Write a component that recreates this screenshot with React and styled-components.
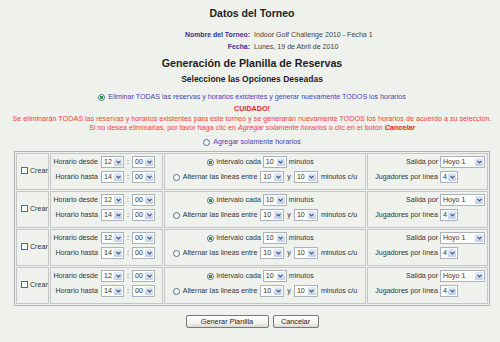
import React from 'react';
import styled, { createGlobalStyle } from 'styled-components';

const GlobalStyle = createGlobalStyle`
  html, body {
    margin: 0;
    padding: 0;
    background: #eff1ec;
  }
  body {
    font-family: 'Liberation Sans', Arial, sans-serif;
    font-size: 7.1px;
    color: #333;
  }
`;

const Page = styled.div`
  box-sizing: border-box;
  width: 500px;
  height: 342px;
  padding-left: 4px;
  display: flex;
  flex-direction: column;
  align-items: center;
  overflow: hidden;
  white-space: nowrap;
`;

const Title = styled.h1`
  margin: 7px 0 0;
  font-size: 10.5px;
  line-height: 13px;
  font-weight: bold;
  color: #1e1e1e;
`;

const InfoGrid = styled.div`
  align-self: stretch;
  margin-top: 9px;
  display: grid;
  grid-template-columns: 1fr 1fr;
  column-gap: 4px;
  line-height: 12px;
`;

const InfoLabel = styled.span`
  justify-self: end;
  font-size: 6.9px;
  font-weight: bold;
  color: #33338f;
`;

const InfoValue = styled.span`
  color: #444;
`;

const Heading = styled.h2`
  margin: 3px 0 0;
  font-size: 10.7px;
  line-height: 14px;
  font-weight: bold;
  color: #1e1e1e;
`;

const SubHeading = styled.h3`
  margin: 3px 0 0;
  font-size: 8.5px;
  line-height: 12px;
  font-weight: bold;
  color: #1e1e1e;
`;

const OptionLine = styled.label`
  margin-top: ${p => p.top}px;
  display: flex;
  align-items: center;
  gap: 3px;
  line-height: 12px;
  color: #4a44b4;
`;

const Warning = styled.div`
  margin-top: 1px;
  text-align: center;
  font-size: 7.2px;
  line-height: 9.5px;
  color: #ec4343;

  strong {
    color: #e02828;
  }
`;

const Radio = styled.span`
  box-sizing: border-box;
  display: inline-block;
  flex: none;
  width: 7px;
  height: 7px;
  border: 1px solid #4d6b93;
  border-radius: 50%;
  background: ${p =>
    p.checked ? 'radial-gradient(circle, #2d9b2d 0 1.4px, #ffffff 1.9px)' : '#ffffff'};
`;

const Checkbox = styled.span`
  box-sizing: border-box;
  display: inline-block;
  flex: none;
  width: 7px;
  height: 7px;
  border: 1px solid #4d6b93;
  background: #ffffff;
`;

const Table = styled.div`
  margin-top: 3px;
  display: grid;
  grid-template-columns: 33px 113px 202px 121px;
  grid-auto-rows: 37px;
  gap: 1px;
  padding: 1px;
  border: 1px solid #b4b4b4;
`;

const Cell = styled.div`
  box-sizing: border-box;
  border: 1px solid #c6c6c6;
`;

const CheckCell = styled(Cell)`
  display: flex;
  align-items: center;
  gap: 2px;
  padding: 0 0 2px 4px;
`;

const TimeCell = styled(Cell)`
  display: grid;
  grid-template-columns: 50px 23px 8px 23px;
  grid-auto-rows: 12px;
  row-gap: 3px;
  align-items: center;
  padding-top: 2px;
`;

const TimeLabel = styled.span`
  justify-self: end;
  padding-right: 3px;
`;

const Colon = styled.span`
  text-align: center;
`;

const IntervalCell = styled(Cell)`
  display: flex;
  flex-direction: column;
  align-items: center;
  gap: 3px;
  padding-top: 2px;
`;

const IntervalLine = styled.label`
  display: flex;
  align-items: center;
  gap: ${p => p.gap}px;
  height: 12px;
  margin-right: ${p => p.shift}px;
`;

const OutputCell = styled(Cell)`
  display: grid;
  grid-template-columns: 1fr 45px;
  grid-auto-rows: 12px;
  column-gap: 2px;
  row-gap: 3px;
  align-items: center;
  padding: 2px 2px 0 3px;
`;

const OutputLabel = styled.span`
  justify-self: end;
`;

const SelectBox = styled.span`
  box-sizing: border-box;
  display: inline-flex;
  justify-self: start;
  width: ${p => p.w}px;
  height: 12px;
  border: 1px solid #a9b2be;
  background: #ffffff;
`;

const SelectValue = styled.span`
  flex: 1;
  padding-left: 2px;
  line-height: 10px;
  color: #333;
`;

const SelectArrow = styled.span`
  box-sizing: border-box;
  display: flex;
  align-items: center;
  justify-content: center;
  width: 8px;
  margin: 1px;
  border-radius: 1px;
  background: linear-gradient(#e3eaf8, #c3d0ea);
`;

const Buttons = styled.div`
  margin-top: 9px;
  display: flex;
  gap: 4px;
`;

const Button = styled.button`
  box-sizing: border-box;
  width: ${p => p.w}px;
  height: 13px;
  padding: 0;
  border: 1px solid #707b88;
  border-radius: 2px;
  background: linear-gradient(#ffffff, #f1f0ec 70%, #d9d5cc);
  font-family: 'Liberation Sans', Arial, sans-serif;
  font-size: 7.3px;
  line-height: 11px;
  color: #222;
`;

const Select = ({ value, w = 24 }) => (
  <SelectBox w={w}>
    <SelectValue>{value}</SelectValue>
    <SelectArrow>
      <svg width="5" height="4" viewBox="0 0 5 4">
        <path d="M0.5 0.8 L2.5 2.8 L4.5 0.8" fill="none" stroke="#3f5682" strokeWidth="1.2" />
      </svg>
    </SelectArrow>
  </SelectBox>
);

const rows = [1, 2, 3, 4];

const App = () => (
  <>
    <GlobalStyle />
    <Page>
      <Title>Datos del Torneo</Title>
      <InfoGrid>
        <InfoLabel>Nombre del Torneo:</InfoLabel>
        <InfoValue>Indoor Golf Challenge 2010 - Fecha 1</InfoValue>
        <InfoLabel>Fecha:</InfoLabel>
        <InfoValue>Lunes, 19 de Abril de 2010</InfoValue>
      </InfoGrid>
      <Heading>Generación de Planilla de Reservas</Heading>
      <SubHeading>Seleccione las Opciones Deseadas</SubHeading>
      <OptionLine top={6}>
        <Radio checked />
        Eliminar TODAS las reservas y horarios existentes y generar nuevamente TODOS los horarios
      </OptionLine>
      <Warning>
        <strong>CUIDADO!</strong>
        <br />
        Se eliminarán TODAS las reservas y horarios existentes para este torneo y se generarán nuevamente TODOS los horarios de acuerdo a su selección.
        <br />
        Si no desea eliminarlas, por favor haga clic en <em>Agregar solamente horarios</em> o clic en el botón{' '}
        <strong>
          <em>Cancelar</em>
        </strong>
      </Warning>
      <OptionLine top={3.5}>
        <Radio />
        Agregar solamente horarios
      </OptionLine>
      <Table>
        {rows.map(row => (
          <React.Fragment key={row}>
            <CheckCell>
              <Checkbox />
              Crear
            </CheckCell>
            <TimeCell>
              <TimeLabel>Horario desde</TimeLabel>
              <Select value="12" w={23} />
              <Colon>:</Colon>
              <Select value="00" w={23} />
              <TimeLabel>Horario hasta</TimeLabel>
              <Select value="14" w={23} />
              <Colon>:</Colon>
              <Select value="00" w={23} />
            </TimeCell>
            <IntervalCell>
              <IntervalLine gap={2} shift={9}>
                <Radio checked />
                Intervalo cada
                <Select value="10" />
                minutos
              </IntervalLine>
              <IntervalLine gap={3} shift={0}>
                <Radio />
                Alternar las lineas entre
                <Select value="10" />
                y
                <Select value="10" />
                minutos c/u
              </IntervalLine>
            </IntervalCell>
            <OutputCell>
              <OutputLabel>Salida por</OutputLabel>
              <Select value="Hoyo 1" w={45} />
              <OutputLabel>Jugadores por línea</OutputLabel>
              <Select value="4" w={18} />
            </OutputCell>
          </React.Fragment>
        ))}
      </Table>
      <Buttons>
        <Button w={83}>Generar Planilla</Button>
        <Button w={46}>Cancelar</Button>
      </Buttons>
    </Page>
  </>
);

export default App;
